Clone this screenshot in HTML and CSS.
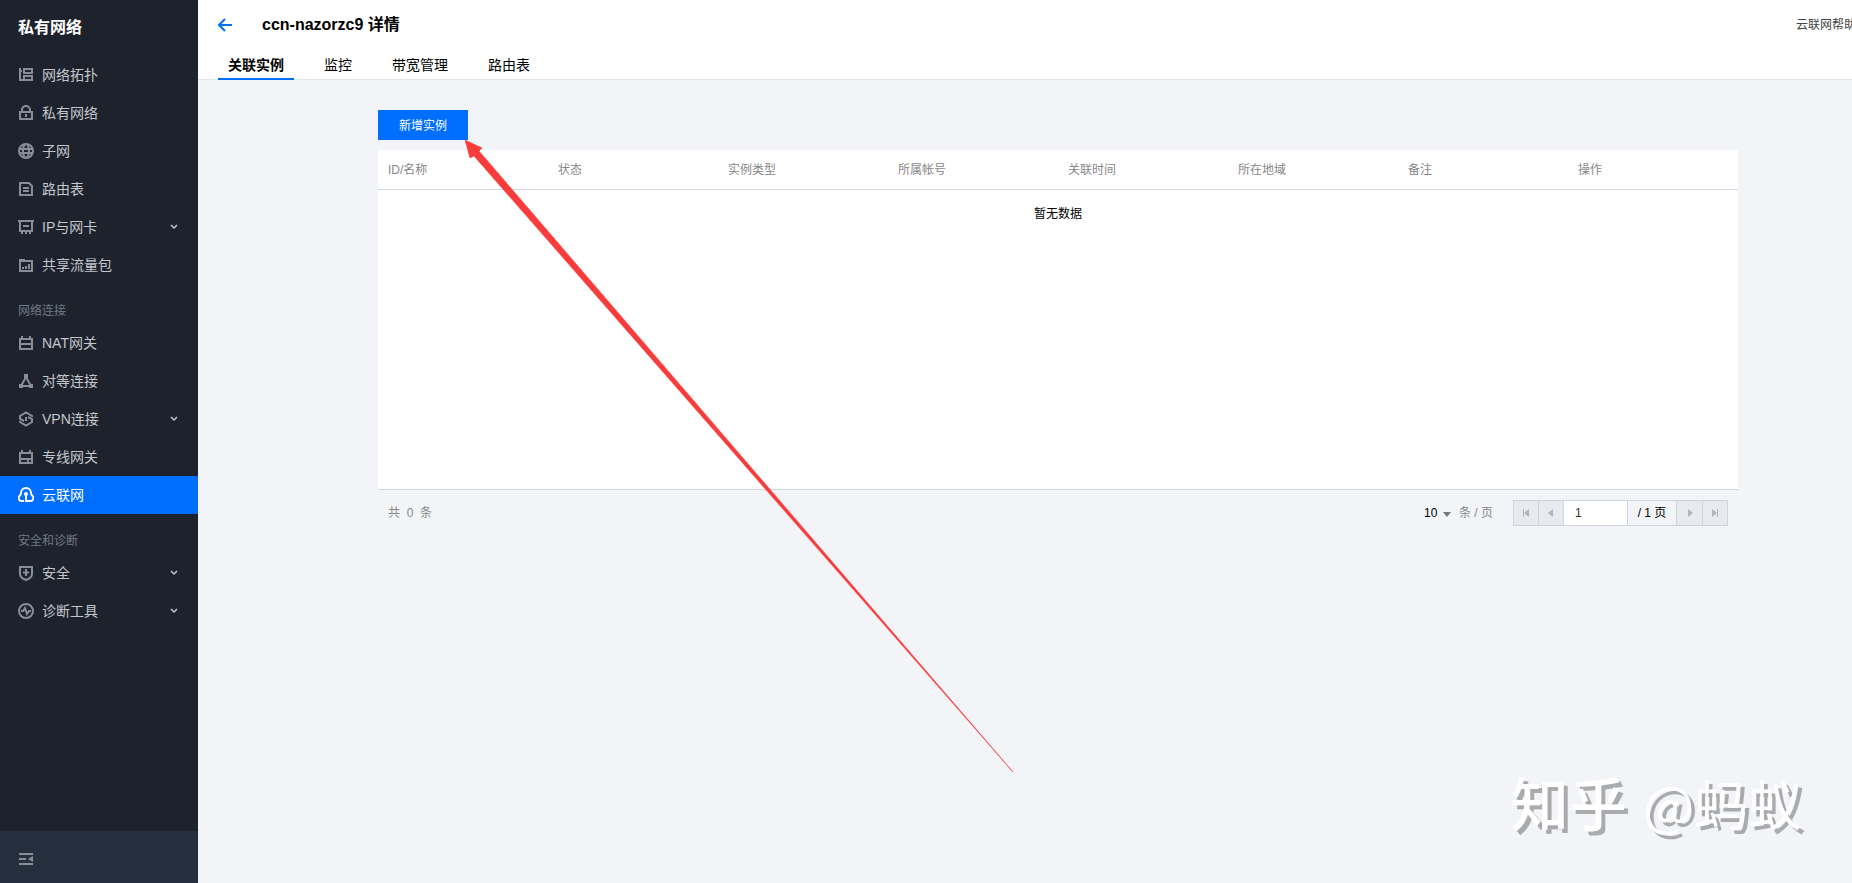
FILE: index.html
```
<!DOCTYPE html>
<html lang="zh-CN">
<head>
  <meta charset="UTF-8">
  <meta name="viewport" content="width=device-width, initial-scale=1.0">
  <title>ccn-nazorzc9 详情</title>
  <link rel="stylesheet" href="styles.css">
</head>
<body>

  <aside class="sidebar">
    <h2 class="sidebar-title">私有网络</h2>
    <nav class="menu">
      <a class="menu-item" href="#">
        <svg class="icon" viewBox="0 0 16 16"><path d="M2 1v13M2 4h2M2 13h4M6 2h8v4H6zM6 9h8v4H6z"/></svg>
        <span>网络拓扑</span>
      </a>
      <a class="menu-item" href="#">
        <svg class="icon" viewBox="0 0 16 16"><path d="M2 7h12v7H2zM4 7V5a4 4 0 0 1 8 0v2M8 9v3"/></svg>
        <span>私有网络</span>
      </a>
      <a class="menu-item" href="#">
        <svg class="icon" viewBox="0 0 16 16"><circle cx="8" cy="8" r="7"/><ellipse cx="8" cy="8" rx="3" ry="7"/><path d="M1 6h14M1 10h14"/></svg>
        <span>子网</span>
      </a>
      <a class="menu-item" href="#">
        <svg class="icon" viewBox="0 0 16 16"><path d="M2 2h9l3 3v9H2zM5 7h6M5 10h6"/></svg>
        <span>路由表</span>
      </a>
      <button class="menu-item" type="button">
        <svg class="icon" viewBox="0 0 16 16"><path d="M0 2h16M2 2v10h12V2M5 7h6M4 12v3M8 12v3M12 12v3"/></svg>
        <span>IP与网卡</span>
        <svg class="chevron" viewBox="0 0 8 6"><path d="M1 1l3 3 3-3"/></svg>
      </button>
      <a class="menu-item" href="#">
        <svg class="icon" viewBox="0 0 16 16"><path d="M2 4h12v10H2zM1 3h6M5 10v2M8 9v3M11 7v5"/></svg>
        <span>共享流量包</span>
      </a>

      <p class="menu-label">网络连接</p>
      <a class="menu-item" href="#">
        <svg class="icon" viewBox="0 0 16 16"><path d="M1 4h14M2 4v10h12V4M2 9h12M4 1v3M12 1v3"/></svg>
        <span>NAT网关</span>
      </a>
      <a class="menu-item" href="#">
        <svg class="icon" viewBox="0 0 16 16"><path d="M8 4L3 13h10z"/><path class="fill" d="M6 1h4v4H6zM1 11h4v4H1zM11 11h4v4h-4z"/></svg>
        <span>对等连接</span>
      </a>
      <button class="menu-item" type="button">
        <svg class="icon" viewBox="0 0 16 16"><path d="M14 6V5L8 1.500 2 5v3l4 2M2 10v1l6 3.500 6-3.500V8l-4-2M8 6v4"/></svg>
        <span>VPN连接</span>
        <svg class="chevron" viewBox="0 0 8 6"><path d="M1 1l3 3 3-3"/></svg>
      </button>
      <a class="menu-item" href="#">
        <svg class="icon" viewBox="0 0 16 16"><path d="M1 4h14M2 4v10h12V4M2 10h12M4 1v3M12 1v3M10 10v4"/></svg>
        <span>专线网关</span>
      </a>
      <a class="menu-item active" href="#" aria-current="page">
        <svg class="icon" viewBox="0 0 16 16"><path d="M6 14H4a3 3 0 0 1-2-5.500C2 8 3 8 3 6a5 5 0 0 1 10 0c0 2 1 2 1 2.500A3 3 0 0 1 12 14H8V8"/><circle class="fill" cx="8" cy="7" r="2"/></svg>
        <span>云联网</span>
      </a>

      <p class="menu-label">安全和诊断</p>
      <button class="menu-item" type="button">
        <svg class="icon" viewBox="0 0 16 16"><path d="M2 2h12v7c0 3-3 5-6 6-3-1-6-3-6-6zM8 4v7M5 7.500h6"/></svg>
        <span>安全</span>
        <svg class="chevron" viewBox="0 0 8 6"><path d="M1 1l3 3 3-3"/></svg>
      </button>
      <button class="menu-item" type="button">
        <svg class="icon" viewBox="0 0 16 16"><circle cx="8" cy="8" r="7"/><path d="M3 8h2l2-3 2 6 2-3h2"/></svg>
        <span>诊断工具</span>
        <svg class="chevron" viewBox="0 0 8 6"><path d="M1 1l3 3 3-3"/></svg>
      </button>
    </nav>
    <div class="sidebar-footer">
      <button class="collapse-btn" type="button" aria-label="收起菜单">
        <svg class="icon" viewBox="0 0 16 16"><path d="M1 3h14M1 8h7M1 13h14"/><path class="fill" d="M15 5v6l-5-3z"/></svg>
      </button>
    </div>
  </aside>

  <main class="main">
    <header class="header">
      <div class="header-top">
        <a class="back" href="#" aria-label="返回">
          <svg viewBox="0 0 16 16"><path d="M7 2L1 8l6 6M1 8h13"/></svg>
        </a>
        <h1 class="title">ccn-nazorzc9 详情</h1>
        <a class="help" href="#">云联网帮助</a>
      </div>
      <nav class="tabs">
        <a class="tab active" href="#">关联实例</a>
        <a class="tab" href="#">监控</a>
        <a class="tab" href="#">带宽管理</a>
        <a class="tab" href="#">路由表</a>
      </nav>
    </header>

    <section class="content">
      <button class="add-btn" type="button">新增实例</button>
      <div class="table-box">
        <table class="table">
          <thead>
            <tr>
              <th>ID/名称</th>
              <th>状态</th>
              <th>实例类型</th>
              <th>所属帐号</th>
              <th>关联时间</th>
              <th>所在地域</th>
              <th>备注</th>
              <th>操作</th>
            </tr>
          </thead>
          <tbody>
            <tr>
              <td colspan="8">暂无数据</td>
            </tr>
          </tbody>
        </table>
      </div>
      <div class="table-footer">
        <span class="total">共&nbsp; 0 &nbsp;条</span>
        <div class="page-size">
          <span class="select-wrap">
            <select id="pageSize">
              <option>10</option>
              <option>20</option>
              <option>50</option>
            </select>
          </span>
          <label for="pageSize">条 / 页</label>
        </div>
        <div class="pager">
          <button type="button" aria-label="首页" disabled><svg viewBox="0 0 8 8"><path d="M1 0h1v8H1zM7 0v8L2 4z"/></svg></button>
          <button type="button" aria-label="上一页" disabled><svg viewBox="0 0 8 8"><path d="M6 0v8L1 4z"/></svg></button>
          <input type="text" value="1" aria-label="页码">
          <span class="page-count">/ 1 页</span>
          <button type="button" aria-label="下一页" disabled><svg viewBox="0 0 8 8"><path d="M2 0v8l5-4z"/></svg></button>
          <button type="button" aria-label="末页" disabled><svg viewBox="0 0 8 8"><path d="M6 0h1v8H6zM1 0v8l5-4z"/></svg></button>
        </div>
      </div>
    </section>
  </main>

  <!-- 指向“新增实例”的箭头 -->
  <svg class="arrow" viewBox="0 0 548 632"><path d="M0 0L17 8l-3 3L548 632 9 16l-4 2z"/></svg>
  <div class="watermark"><span>知乎</span> @蚂蚁</div>

</body>
</html>
```
FILE: styles.css
```
* {
  box-sizing: border-box;
}

body {
  display: flex;
  position: relative;
  min-height: 100vh;
  margin: 0;
  overflow-x: hidden;
  font-family: "Liberation Sans", "Noto Sans CJK SC", sans-serif;
  font-size: 12px;
  line-height: 20px;
  color: #000;
  background-color: #f2f4f8;
}

a {
  color: inherit;
  text-decoration: none;
}

button,
input,
select {
  font: inherit;
  border: none;
  border-radius: 0;
}

button {
  cursor: pointer;
}

svg {
  display: block;
}

/* 左侧菜单 */
.sidebar {
  display: flex;
  flex-direction: column;
  flex: none;
  width: 198px;
  background-color: #1e222d;
}

.sidebar-title {
  margin: 0;
  padding: 16px 18px;
  font-size: 16px;
  line-height: 24px;
  color: #fff;
}

.menu {
  flex: 1;
}

.menu-item {
  display: flex;
  align-items: center;
  gap: 8px;
  width: 100%;
  height: 38px;
  padding: 0 20px 0 18px;
  font-size: 14px;
  color: #c3c6cc;
  background: none;
}

.menu-item.active {
  color: #fff;
  background-color: #006eff;
}

.menu-label {
  margin: 0;
  padding: 17px 18px 3px;
  color: #6f7983;
}

.icon {
  flex: none;
  width: 16px;
  height: 16px;
  fill: none;
  stroke: #878e98;
  stroke-width: 2;
}

.icon .fill {
  fill: #878e98;
  stroke: none;
}

.active .icon {
  stroke: #fff;
}

.active .icon .fill {
  fill: #fff;
}

.chevron {
  width: 8px;
  height: 6px;
  margin-left: auto;
  fill: none;
  stroke: #c3c6cc;
  stroke-width: 1.5;
}

.sidebar-footer {
  display: flex;
  align-items: center;
  height: 52px;
  padding: 4px 18px 0;
  background-color: #262f3e;
}

.collapse-btn {
  padding: 0;
  background: none;
}

/* 右侧 */
.main {
  flex: 1;
  min-width: 0;
}

.header {
  height: 80px;
  padding-left: 20px;
  background-color: #fff;
  border-bottom: 1px solid #e1e4e9;
}

.header-top {
  display: flex;
  align-items: center;
  height: 50px;
}

.back svg {
  width: 16px;
  height: 16px;
  fill: none;
  stroke: #006eff;
  stroke-width: 2;
}

.title {
  margin: 0 auto 0 28px;
  font-size: 16px;
  line-height: 24px;
}

.help {
  margin-right: -4px;
  white-space: nowrap;
  color: #444;
}

.tabs {
  display: flex;
  gap: 20px;
}

.tab {
  height: 30px;
  padding: 5px 10px 0;
  font-size: 14px;
}

.tab.active {
  font-weight: bold;
  border-bottom: 2px solid #006eff;
}

.content {
  padding: 30px 114px 30px 180px;
}

.add-btn {
  display: block;
  height: 30px;
  padding: 1px 20px 0;
  min-width: 90px;
  color: #fff;
  background-color: #006eff;
}

.table-box {
  min-height: 340px;
  margin-top: 10px;
  background-color: #fff;
  border-bottom: 1px solid #cfd5de;
}

.table {
  width: 100%;
  table-layout: fixed;
  border-spacing: 0;
}

.table th {
  height: 40px;
  padding: 1px 10px 0;
  font-weight: normal;
  text-align: left;
  color: #888;
  border-bottom: 1px solid #cfd5de;
}

.table td {
  padding: 14px 10px;
  text-align: center;
}

.table-footer {
  display: flex;
  align-items: center;
  padding: 10px;
  color: #888;
}

.page-size {
  display: flex;
  gap: 8px;
  margin: 0 20px 0 auto;
}

.select-wrap {
  position: relative;
}

.select-wrap::after {
  content: "";
  position: absolute;
  top: 9px;
  right: 0;
  border: 4px solid transparent;
  border-top: 5px solid #777;
  border-bottom: none;
  pointer-events: none;
}

.page-size select {
  appearance: none;
  width: 27px;
  padding: 0;
  color: #000;
  background: none;
}

.pager {
  display: flex;
  height: 26px;
  border: 1px solid #cfd5de;
}

.pager button {
  display: flex;
  align-items: center;
  justify-content: center;
  width: 25px;
  padding: 0;
  background-color: #e7eaef;
}

.pager button:first-child {
  width: 24px;
}

.pager button + button {
  border-left: 1px solid #cfd5de;
}

.pager svg {
  width: 8px;
  height: 8px;
  fill: #b0b5bd;
}

.pager input {
  width: 64px;
  padding: 0 11px;
  color: #333;
  background-color: #fff;
}

.pager input,
.page-count {
  border: solid #cfd5de;
  border-width: 0 0 0 1px;
}

.page-count {
  width: 50px;
  line-height: 24px;
  text-align: center;
  color: #000;
  border-right-width: 1px;
}

.arrow {
  position: absolute;
  top: 140px;
  left: 465px;
  width: 548px;
  height: 632px;
  fill: #f83c3c;
  stroke: #f83c3c;
  stroke-width: 0.6;
  pointer-events: none;
}

.watermark {
  position: absolute;
  right: 50px;
  bottom: 48px;
  font-family: "Noto Sans CJK SC", sans-serif;
  font-size: 54px;
  line-height: 64px;
  color: #fff;
  text-shadow: 4px 4px 0 #a9abad;
  pointer-events: none;
}

.watermark span {
  margin-right: 4px;
  font-size: 58px;
  font-weight: 500;
}
```
